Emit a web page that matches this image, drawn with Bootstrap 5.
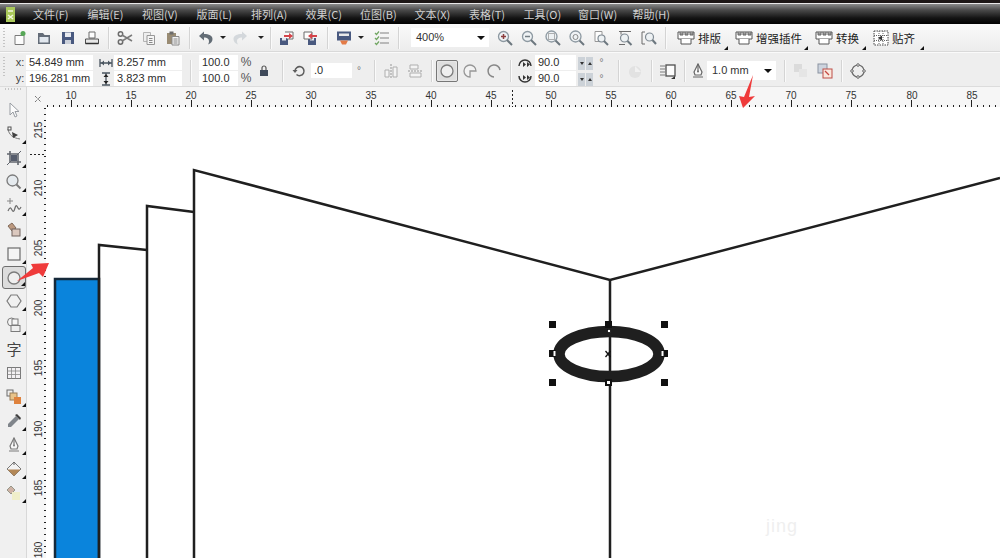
<!DOCTYPE html>
<html lang="zh">
<head>
<meta charset="utf-8">
<title>CorelDRAW</title>
<link href="https://cdn.jsdelivr.net/npm/bootstrap@5.3.0/dist/css/bootstrap.min.css" rel="stylesheet">
<style>
html,body{margin:0;width:1000px;height:558px;overflow:hidden;background:#f0f0f0}
body{font:11px/1.2 "Liberation Sans","Noto Sans CJK SC",sans-serif;color:#333}
.app-frame{width:1000px;height:558px;position:relative;overflow:hidden}
.top-strip{height:3px;background:#1d1716}
.white-line{height:1px;background:#e8e8e8}
.menu-bar{height:20px;background:linear-gradient(#8a8a8a 0,#4a4a4a 30%,#141414 70%,#000 100%);padding-left:6px;color:#d0d0d0;font:11px/20px "Noto Sans CJK SC","Liberation Sans",sans-serif}
.menu-bar .logo{width:27px}
.menu-item{width:54.5px;white-space:nowrap}
.tool-bar{height:27px;background:linear-gradient(#fafafa,#ececec);padding-left:8px;position:relative}
.line-gap{height:2px;background:#fafafa;border-top:1px solid #d9d9d9}
.prop-bar{height:34px;background:#eeeeee;padding-left:14px;padding-top:2px;border-bottom:1px solid #dcdcdc}
.ic{width:24px;height:24px;display:flex;align-items:center;justify-content:center;padding:0;border:0;border-radius:0;flex:none}
.ic svg,.lbl svg{display:block}
.ic svg{opacity:.85}
.dd{width:10px;height:24px;display:flex;align-items:center;justify-content:center;flex:none}
.dd::after{content:"";border:3px solid transparent;border-top:3px solid #222;border-bottom:0}
.sep{width:1px;height:22px;background:#d4d4d4;margin:0 4px;box-shadow:1px 0 0 #fafafa;flex:none}
.grip{position:absolute;left:3px;top:4px;width:2px;height:20px;background:repeating-linear-gradient(#c4c4c4 0 1px,transparent 1px 3px)}
.field{height:15px;background:#fff;line-height:15px;padding-left:3px;white-space:nowrap;color:#2d2d2d;flex:none}
.combo{height:19px;background:#fff;padding-left:5px;line-height:19px;position:relative;flex:none}
.combo::after{content:"";position:absolute;right:4px;top:8px;border:4px solid transparent;border-top:4px solid #111;border-bottom:0}
.w-z{width:78px}.w-o{width:69px}
.w-a{width:67px}.w-b{width:68px}.w-c{width:39px}.w-d{width:41px}
.lbl{display:flex;align-items:center;gap:3px;height:24px;position:relative;font:11.5px/24px "Noto Sans CJK SC",sans-serif;color:#222;flex:none;padding-left:7px;white-space:nowrap}
.lbl::after{content:"";position:absolute;right:0;bottom:0;border:2px solid transparent;border-right-color:#111;border-bottom-color:#111}
.l1{width:58px}.l2{width:80px}.l3{width:58px}.l4{width:58px}
.stack{display:flex;flex-direction:column;gap:1px;flex:none}
.axis{width:12px;color:#444;flex:none;text-align:center}
.mini-ic{width:20px;height:15px;display:flex;align-items:center;justify-content:center;flex:none}
.mini-ic.nar{width:17px}
.mini-ic.nar2{width:18px}
.pct{width:16px;height:15px;line-height:15px;font-size:12px;color:#555;text-align:center;flex:none}
.deg{font-size:10px;color:#777;flex:none;width:14px;text-align:center}
.deg.wide{width:17px}
.spin{display:flex;gap:1px;flex:none;margin-left:2px}
.spin span{width:7px;height:13px;background:#ccd2d8;display:flex;align-items:center;justify-content:center;margin-top:1px}
.spin .dn::after{content:"";border:2px solid transparent;border-top:3px solid #333;border-bottom:0}
.spin .up::after{content:"";border:2px solid transparent;border-bottom:3px solid #333;border-top:0}
.shape-on{width:22px;height:22px;background:#dedede;border:1px solid #777;border-radius:2px;box-shadow:inset 0 0 2px #fff}
.work{height:471px}
.tool-box{width:27px;background:#f0f0f0;padding-top:11px;border-right:1px solid #d8d8d8;position:relative;flex:none}
.tool-box .ic{margin-left:2px;position:relative}
.tool-box .fly::after{content:"";position:absolute;right:0;bottom:2px;border:2.5px solid transparent;border-right-color:#111;border-bottom-color:#111}
.tool-box .ic.picked{background:#dcdcdc;border:1px solid #6e6e6e;border-radius:3px;height:23px}
.tool-box .glyph{font:15px/24px "Noto Sans CJK SC",sans-serif;color:#444}
.top-grip{position:absolute;left:5px;top:1px;width:16px;height:2px;background:repeating-linear-gradient(90deg,#c4c4c4 0 1px,transparent 1px 3px)}
.stage{display:block;flex:none}
.stage text{font:10px "Liberation Sans",sans-serif;fill:#333}
.stage .mark{font:18px "Liberation Sans",sans-serif;fill:#efefef;letter-spacing:1px}
.callout{position:absolute;left:0;top:0;pointer-events:none}
</style>
</head>
<body>
<svg width="0" height="0" class="position-absolute">
<defs>
<symbol id="i-new" viewBox="0 0 16 16"><path d="M3 5.500h6l3 0v9H3z" fill="#fff" stroke="#666"/><circle cx="11" cy="3.500" r="2.500" fill="#3c9a3c"/></symbol>
<symbol id="i-open" viewBox="0 0 16 16"><path d="M2 3h5l1.500 2H14v9H2z" fill="#4b5563" /><rect x="3.500" y="7" width="9" height="5.500" fill="#dfe6ee"/></symbol>
<symbol id="i-save" viewBox="0 0 16 16"><path d="M2 2h12v12H2z" fill="#2c3f6c"/><rect x="5" y="2.500" width="6" height="4.500" fill="#e6e9f0"/><rect x="5" y="10" width="6" height="4" fill="#c5cbd6"/></symbol>
<symbol id="i-print" viewBox="0 0 16 16"><path d="M5 2h6v6H5z" fill="#fff" stroke="#555"/><path d="M1.500 9h13v4.500h-13z" fill="#e6e6e6" stroke="#333"/><path d="M1.500 13.500h13" stroke="#111" stroke-width="1.500"/></symbol>
<symbol id="i-cut" viewBox="0 0 16 16"><circle cx="3.500" cy="4" r="2.200" fill="none" stroke="#555" stroke-width="1.500"/><circle cx="3.500" cy="12" r="2.200" fill="none" stroke="#555" stroke-width="1.500"/><path d="M5 5l10 6M5 11L15 5" stroke="#666" stroke-width="1.500"/></symbol>
<symbol id="i-copy" viewBox="0 0 16 16"><path d="M2.500 2.500h7v9h-7z" fill="#eee" stroke="#aaa"/><path d="M6 5.500h7.500v9H6z" fill="#f6f6f6" stroke="#888"/><path d="M8 8.500h3.500M8 10.500h3.500M8 12.500h3.500" stroke="#777"/></symbol>
<symbol id="i-paste" viewBox="0 0 16 16"><path d="M2 3h9v11H2z" fill="#8a7a5e"/><rect x="4.500" y="1.500" width="4" height="3" fill="#555"/><path d="M7 6.500h7v8.500H7z" fill="#f4f4f4" stroke="#777"/><path d="M8.500 9h4M8.500 11h4M8.500 13h4" stroke="#777"/></symbol>
<symbol id="i-undo" viewBox="0 0 16 16"><path d="M6 1.500L1 6l5 4.500V7.500c3 0 5 1 5 4 0 1-.3 2-1 3 3-1 4.500-3 4.500-5.500 0-3.500-3.500-5-8.500-5z" fill="#4a5560"/></symbol>
<symbol id="i-redo" viewBox="0 0 16 16"><path d="M10 1.500L15 6l-5 4.500V7.500c-3 0-5 1-5 4 0 1 .3 2 1 3-3-1-4.500-3-4.500-5.500 0-3.500 3.500-5 8.500-5z" fill="#cfd4d8"/></symbol>
<symbol id="i-imp" viewBox="0 0 16 16"><rect x="1" y="8" width="8" height="7" fill="#2c3f6c"/><rect x="3" y="8" width="4" height="2.500" fill="#dfe4ec"/><path d="M6 2h8v7H8" fill="#fff" stroke="#555"/><path d="M5 5h5V3l4 3-4 3V7H5z" fill="#d0262d"/></symbol>
<symbol id="i-exp" viewBox="0 0 16 16"><rect x="5" y="8" width="8" height="7" fill="#2c3f6c"/><rect x="7" y="8" width="4" height="2.500" fill="#dfe4ec"/><path d="M1 2h8v7H1z" fill="#fff" stroke="#555"/><path d="M14 5H9V3L5 6l4 3V7h5z" fill="#d0262d"/></symbol>
<symbol id="i-app" viewBox="0 0 16 16"><rect x="1" y="1.500" width="14" height="9" fill="#2c3f6c"/><rect x="3" y="3.500" width="10" height="2.500" fill="#e8e8e8"/><path d="M4 10.500h8l-2 4H6z" fill="#e2672a"/></symbol>
<symbol id="i-opt" viewBox="0 0 16 16"><path d="M6 3h9M6 8h9M6 13h9" stroke="#9a9a9a" stroke-width="1.500"/><path d="M1 3l1.500 1.500L5 1.500M1 8l1.500 1.500L5 6.500M1 13l1.500 1.500L5 11.500" fill="none" stroke="#5c9a4a" stroke-width="1.200"/></symbol>
<symbol id="z-in" viewBox="0 0 16 16"><circle cx="6.500" cy="6.500" r="5" fill="#eef2f5" stroke="#7c8a94" stroke-width="1.300"/><path d="M10 10l5 5" stroke="#56636c" stroke-width="2"/><path d="M4 6.500h5M6.500 4v5" stroke="#7a1f1f" stroke-width="1.500"/></symbol>
<symbol id="z-out" viewBox="0 0 16 16"><circle cx="6.500" cy="6.500" r="5" fill="#eef2f5" stroke="#7c8a94" stroke-width="1.300"/><path d="M10 10l5 5" stroke="#56636c" stroke-width="2"/><path d="M4 6.500h5" stroke="#5d6a72" stroke-width="1.500"/></symbol>
<symbol id="z-sel" viewBox="0 0 16 16"><circle cx="6.500" cy="6.500" r="5.500" fill="#eef2f5" stroke="#7c8a94" stroke-width="1.300"/><path d="M10.500 10.500l4.500 4.500" stroke="#56636c" stroke-width="2"/><rect x="3.500" y="3.500" width="6" height="6" fill="none" stroke="#555" stroke-dasharray="1 1"/></symbol>
<symbol id="z-all" viewBox="0 0 16 16"><circle cx="6.500" cy="6.500" r="5.500" fill="#eef2f5" stroke="#7c8a94" stroke-width="1.300"/><path d="M10.500 10.500l4.500 4.500" stroke="#56636c" stroke-width="2"/><circle cx="6.500" cy="7" r="2.500" fill="none" stroke="#777"/></symbol>
<symbol id="z-page" viewBox="0 0 16 16"><path d="M2 1.500h7v10H2z" fill="#fff" stroke="#888"/><circle cx="8.500" cy="8.500" r="3.500" fill="#eef2f5" stroke="#6d7a84" stroke-width="1.200"/><path d="M11 11l4 4" stroke="#56636c" stroke-width="2"/></symbol>
<symbol id="z-wid" viewBox="0 0 16 16"><path d="M2 1.500h12M2 14.500h6M4 1.500v3" stroke="#555"/><circle cx="7.500" cy="8" r="4" fill="#eef2f5" stroke="#6d7a84" stroke-width="1.200"/><path d="M10.500 11l4 4" stroke="#56636c" stroke-width="2"/></symbol>
<symbol id="z-hei" viewBox="0 0 16 16"><path d="M1 2v12M1 2h3M1 14h3" stroke="#555"/><circle cx="8.500" cy="7" r="4" fill="#eef2f5" stroke="#6d7a84" stroke-width="1.200"/><path d="M11.500 10l3.500 4" stroke="#56636c" stroke-width="2"/></symbol>
<symbol id="i-tray" viewBox="0 0 18 16"><path d="M1 2h16v7H1z" fill="#fff" stroke="#555"/><path d="M3 2v3h3V2M8 2v3h3V2M13 2v3h3V2" fill="#999" stroke="#666"/><path d="M4 9v5h10V9" fill="#fff" stroke="#555"/></symbol>
<symbol id="i-snap" viewBox="0 0 16 16"><rect x="1" y="1" width="14" height="14" fill="#fff" stroke="#444" stroke-dasharray="1.500 1"/><path d="M6 1v14M10 1v14M1 5.500h14M1 10.500h14" stroke="#666" stroke-dasharray="1 1"/><path d="M5 8l4-2.500v5z" fill="#333"/></symbol>
<symbol id="i-wid" viewBox="0 0 14 10"><path d="M1 5h12M1 1v8M13 1v8" stroke="#4a5560" stroke-width="1.300"/><path d="M2 5l3-2.500v5zM12 5L9 2.500v5z" fill="#4a5560"/></symbol>
<symbol id="i-hei" viewBox="0 0 10 14"><path d="M5 1v12M1 1h8M1 13h8" stroke="#4a5560" stroke-width="1.300"/><path d="M5 2L2.500 5h5zM5 12L2.500 9h5z" fill="#222"/></symbol>
<symbol id="i-lock" viewBox="0 0 10 12"><path d="M3 5V3a2 2 0 0 1 4 0v2" fill="none" stroke="#555" stroke-width="1.200"/><rect x="1" y="5" width="8" height="6" fill="#3f4a5a"/></symbol>
<symbol id="i-rot" viewBox="0 0 14 14"><path d="M3 7a4.500 4.500 0 1 1 1.500 3.500" fill="none" stroke="#444" stroke-width="1.500"/><path d="M0.500 6h5L3 9z" fill="#444"/></symbol>
<symbol id="i-mir1" viewBox="0 0 16 16"><path d="M8 1v14" stroke="#888" stroke-dasharray="2 1"/><path d="M2 7h4v7H2zM10 4h4v10h-4z" fill="#f6f6f6" stroke="#a4a4a4"/></symbol>
<symbol id="i-mir2" viewBox="0 0 16 16"><path d="M1 8h14" stroke="#888" stroke-dasharray="2 1"/><path d="M3 2h8v4H3zM3 10h11v4H3z" fill="#f6f6f6" stroke="#a4a4a4"/></symbol>
<symbol id="i-arc0" viewBox="0 0 16 16"><circle cx="8" cy="8" r="6" fill="#f3f3f3" stroke="#6b6b6b" stroke-width="1.300"/></symbol>
<symbol id="i-arc1" viewBox="0 0 16 16"><path d="M8 8h6A6 6 0 1 0 8 14z" fill="#f5f5f5" stroke="#888" stroke-width="1.300"/></symbol>
<symbol id="i-arc2" viewBox="0 0 16 16"><path d="M14 7A6 6 0 1 0 8 14" fill="none" stroke="#777" stroke-width="1.500"/></symbol>
<symbol id="i-ang" viewBox="0 0 16 10"><path d="M2 8a6 6 0 0 1 12 0" fill="none" stroke="#333" stroke-width="1.500"/><path d="M6 9V4l3 2.500zM10 9V4l3 2.500z" fill="#333"/></symbol>
<symbol id="i-ang2" viewBox="0 0 16 10"><path d="M2 2a6 6 0 0 0 12 0" fill="none" stroke="#333" stroke-width="1.500"/><path d="M6 1v5l3-2.500zM10 1v5l3-2.500z" fill="#333"/></symbol>
<symbol id="i-wrap" viewBox="0 0 16 16"><circle cx="8" cy="9" r="6" fill="#e0e0e0"/><path d="M8 3v6h6" fill="#f2f2f2"/></symbol>
<symbol id="i-text" viewBox="0 0 16 16"><path d="M0 3h5M0 6h5M0 9h5M0 12h5" stroke="#666"/><rect x="6" y="2" width="9" height="11" fill="#fff" stroke="#333" stroke-width="1.300"/><path d="M11 16l4-3v3z" fill="#111"/></symbol>
<symbol id="i-pen" viewBox="0 0 14 16"><path d="M7 1L3 9l1 3h6l1-3z" fill="#fafafa" stroke="#666" stroke-width="1.200"/><path d="M7 1v7M2 14h10" stroke="#666" stroke-width="1.200"/><circle cx="7" cy="8.500" r="1" fill="#666"/></symbol>
<symbol id="i-back" viewBox="0 0 16 16"><rect x="1" y="1" width="8" height="8" fill="#d8d8d8"/><rect x="6" y="6" width="8" height="8" fill="#e4e4e4"/></symbol>
<symbol id="i-front" viewBox="0 0 16 16"><rect x="1" y="1" width="9" height="9" fill="#c8d0dc" stroke="#7a8494"/><rect x="6" y="6" width="9" height="9" fill="#fbe7dc" stroke="#b5332b"/><path d="M8 8l4 4" stroke="#c02a22" stroke-width="1.200"/></symbol>
<symbol id="i-round" viewBox="0 0 16 16"><circle cx="8" cy="8" r="6" fill="none" stroke="#555" stroke-width="1.200"/><g fill="#eee" stroke="#555"><circle cx="8" cy="2" r="1.300"/><circle cx="8" cy="14" r="1.300"/><circle cx="2" cy="8" r="1.300"/><circle cx="14" cy="8" r="1.300"/></g></symbol>
<symbol id="t-arrow" viewBox="0 0 16 16"><path d="M4 1v12l3-3 2 5 2-1-2-4.500h4z" fill="#fff" stroke="#8a8f96"/></symbol>
<symbol id="t-shape" viewBox="0 0 16 16"><path d="M2 3c1 6 5 9 12 10" fill="none" stroke="#666"/><rect x="2" y="1" width="3" height="3" fill="#fff" stroke="#333"/><path d="M6 6l6 3-5 3z" fill="#222"/></symbol>
<symbol id="t-crop" viewBox="0 0 16 16"><path d="M4 1v11h11M1 4h11v11" fill="none" stroke="#4a4f58" stroke-width="1.600"/><path d="M1 15L15 1" stroke="#4a4f58"/><rect x="5" y="5" width="6" height="6" fill="#3a4356"/></symbol>
<symbol id="t-zoom" viewBox="0 0 16 16"><circle cx="6.500" cy="6.500" r="5.500" fill="#e4e9ee" stroke="#666" stroke-width="1.300"/><path d="M10.500 10.500l4 4" stroke="#666" stroke-width="2"/></symbol>
<symbol id="t-free" viewBox="0 0 16 16"><path d="M4 0v6M1 3h6" stroke="#777"/><path d="M2 13c2-5 3-3 4-1s2 2 3-2 2-2 3 0 2 1 3-1" fill="none" stroke="#555" stroke-width="1.200"/></symbol>
<symbol id="t-smart" viewBox="0 0 16 16"><path d="M2 4l4-3 4 5-4 3z" fill="#b48a6c" stroke="#6e5340"/><rect x="6" y="7" width="8" height="7" fill="#d8c2b6" stroke="#5a4a44"/></symbol>
<symbol id="t-rect" viewBox="0 0 16 16"><rect x="2" y="2" width="12" height="12" fill="#f6f6f6" stroke="#555" stroke-width="1.200"/></symbol>
<symbol id="t-poly" viewBox="0 0 16 16"><path d="M5 2h6l4 6-4 6H5L1 8z" fill="#f2f2f2" stroke="#666" stroke-width="1.200"/></symbol>
<symbol id="t-basic" viewBox="0 0 16 16"><circle cx="5.500" cy="5" r="4" fill="#f6f6f6" stroke="#666"/><rect x="6" y="2" width="6" height="6" fill="#f6f6f6" stroke="#666"/><rect x="5" y="8.500" width="9" height="6" fill="#eee" stroke="#666"/></symbol>
<symbol id="t-table" viewBox="0 0 16 16"><rect x="1.500" y="2.500" width="13" height="11" fill="#f4f2f4" stroke="#666"/><path d="M5.500 2.500v11M9.500 2.500v11M1.500 6h13M1.500 9.500h13" stroke="#777" stroke-width=".8"/></symbol>
<symbol id="t-blend" viewBox="0 0 16 16"><rect x="1" y="1" width="6" height="6" fill="#eee" stroke="#555"/><rect x="4" y="4" width="7" height="7" fill="#e7bc78" stroke="#8a6a3c"/><rect x="8" y="8" width="7" height="7" fill="#dd6f1e"/></symbol>
<symbol id="t-drop" viewBox="0 0 16 16"><path d="M10 3l3 3-8 8H2v-3z" fill="#6d737a"/><path d="M9 2l2-1 4 4-1 2z" fill="#222"/></symbol>
<symbol id="t-fill" viewBox="0 0 16 16"><path d="M8 1l7 7-7 7-7-7z" fill="#f4f4f4" stroke="#666"/><path d="M1.500 8.500h13L8 15z" fill="#a8753c"/><path d="M8 1v3" stroke="#444"/></symbol>
<symbol id="t-inter" viewBox="0 0 16 16"><path d="M1 5l4-4 4 4-4 4z" fill="#c9a898" stroke="#887"/><rect x="6" y="7" width="8" height="8" fill="#f0efc4"/></symbol>
</defs>
</svg>

<div class="app-frame">
  <div class="top-strip"></div>
  <div class="white-line"></div>
  <nav class="menu-bar d-flex">
    <div class="logo d-flex align-items-center"><svg width="9" height="15" viewBox="0 0 9 15"><rect width="9" height="15" fill="#a9c85a"/><path d="M2 4h5M2 8l5 4M7 8l-5 4" stroke="#f4f8e0" stroke-width="1.500"/></svg></div>
    <span class="menu-item">文件(F)</span><span class="menu-item">编辑(E)</span><span class="menu-item">视图(V)</span><span class="menu-item">版面(L)</span><span class="menu-item">排列(A)</span><span class="menu-item">效果(C)</span><span class="menu-item">位图(B)</span><span class="menu-item">文本(X)</span><span class="menu-item">表格(T)</span><span class="menu-item">工具(O)</span><span class="menu-item">窗口(W)</span><span class="menu-item">帮助(H)</span>
  </nav>
  <div class="tool-bar d-flex align-items-center">
    <i class="grip"></i>
    <button class="btn ic"><svg width="16" height="16"><use href="#i-new"/></svg></button>
    <button class="btn ic"><svg width="16" height="16"><use href="#i-open"/></svg></button>
    <button class="btn ic"><svg width="16" height="16"><use href="#i-save"/></svg></button>
    <button class="btn ic"><svg width="16" height="16"><use href="#i-print"/></svg></button>
    <span class="sep"></span>
    <button class="btn ic"><svg width="16" height="16"><use href="#i-cut"/></svg></button>
    <button class="btn ic"><svg width="16" height="16"><use href="#i-copy"/></svg></button>
    <button class="btn ic"><svg width="16" height="16"><use href="#i-paste"/></svg></button>
    <span class="sep"></span>
    <button class="btn ic"><svg width="16" height="16"><use href="#i-undo"/></svg></button><span class="dd"></span>
    <button class="btn ic"><svg width="16" height="16"><use href="#i-redo"/></svg></button><span class="dd ms-1"></span>
    <span class="sep"></span>
    <button class="btn ic"><svg width="16" height="16"><use href="#i-imp"/></svg></button>
    <button class="btn ic"><svg width="16" height="16"><use href="#i-exp"/></svg></button>
    <span class="sep"></span>
    <button class="btn ic"><svg width="16" height="16"><use href="#i-app"/></svg></button><span class="dd"></span>
    <button class="btn ic ms-1"><svg width="16" height="16"><use href="#i-opt"/></svg></button>
    <span class="sep"></span>
    <div class="combo w-z ms-2">400%</div>
    <button class="btn ic ms-1"><svg width="16" height="16"><use href="#z-in"/></svg></button>
    <button class="btn ic"><svg width="16" height="16"><use href="#z-out"/></svg></button>
    <button class="btn ic"><svg width="16" height="16"><use href="#z-sel"/></svg></button>
    <button class="btn ic"><svg width="16" height="16"><use href="#z-all"/></svg></button>
    <button class="btn ic"><svg width="16" height="16"><use href="#z-page"/></svg></button>
    <button class="btn ic"><svg width="16" height="16"><use href="#z-wid"/></svg></button>
    <button class="btn ic"><svg width="16" height="16"><use href="#z-hei"/></svg></button>
    <span class="sep"></span>
    <div class="lbl l1"><svg width="18" height="16"><use href="#i-tray"/></svg>排版</div>
    <div class="lbl l2"><svg width="18" height="16"><use href="#i-tray"/></svg>增强插件</div>
    <div class="lbl l3"><svg width="18" height="16"><use href="#i-tray"/></svg>转换</div>
    <div class="lbl l4"><svg width="16" height="16"><use href="#i-snap"/></svg>贴齐</div>
  </div>
  <div class="line-gap"></div>
  <div class="prop-bar d-flex align-items-center position-relative">
    <i class="grip"></i>
    <div class="stack"><div class="d-flex"><span class="axis field bg-transparent p-0">x:</span><span class="field w-a">54.849 mm</span></div><div class="d-flex"><span class="axis field bg-transparent p-0">y:</span><span class="field w-a">196.281 mm</span></div></div>
    <div class="stack ms-1"><div class="d-flex"><span class="mini-ic nar"><svg width="14" height="10"><use href="#i-wid"/></svg></span><span class="field w-b">8.257 mm</span></div><div class="d-flex"><span class="mini-ic nar"><svg width="10" height="14"><use href="#i-hei"/></svg></span><span class="field w-b">3.823 mm</span></div></div>
    <span class="sep ms-2"></span>
    <div class="stack ms-1"><span class="field w-c">100.0</span><span class="field w-c">100.0</span></div>
    <div class="stack"><span class="pct">%</span><span class="pct">%</span></div>
    <span class="mini-ic"><svg width="10" height="12"><use href="#i-lock"/></svg></span>
    <span class="sep ms-2"></span>
    <span class="ic"><svg width="14" height="14"><use href="#i-rot"/></svg></span>
    <span class="field w-d">.0</span><span class="deg">°</span>
    <span class="sep ms-2"></span>
    <button class="btn ic"><svg width="16" height="16"><use href="#i-mir1"/></svg></button>
    <button class="btn ic"><svg width="16" height="16"><use href="#i-mir2"/></svg></button>
    <span class="sep"></span>
    <button class="btn ic shape-on"><svg width="16" height="16"><use href="#i-arc0"/></svg></button>
    <button class="btn ic"><svg width="16" height="16"><use href="#i-arc1"/></svg></button>
    <button class="btn ic"><svg width="16" height="16"><use href="#i-arc2"/></svg></button>
    <span class="sep"></span>
    <div class="stack"><div class="d-flex align-items-center"><span class="mini-ic"><svg width="16" height="10"><use href="#i-ang"/></svg></span><span class="field w-d">90.0</span><span class="spin"><span class="dn"></span><span class="up"></span></span><span class="deg wide">°</span></div><div class="d-flex align-items-center"><span class="mini-ic"><svg width="16" height="10"><use href="#i-ang2"/></svg></span><span class="field w-d">90.0</span><span class="spin"><span class="dn"></span><span class="up"></span></span><span class="deg wide">°</span></div></div>
    <span class="sep ms-2"></span>
    <button class="btn ic"><svg width="16" height="16"><use href="#i-wrap"/></svg></button>
    <span class="sep"></span>
    <button class="btn ic"><svg width="16" height="16"><use href="#i-text"/></svg></button>
    <span class="sep"></span>
    <span class="mini-ic nar2"><svg width="14" height="16"><use href="#i-pen"/></svg></span>
    <div class="combo w-o">1.0 mm</div>
    <span class="sep ms-2"></span>
    <button class="btn ic"><svg width="16" height="16"><use href="#i-back"/></svg></button>
    <button class="btn ic"><svg width="16" height="16"><use href="#i-front"/></svg></button>
    <span class="sep"></span>
    <button class="btn ic"><svg width="16" height="16"><use href="#i-round"/></svg></button>
  </div>
  <div class="work d-flex">
    <aside class="tool-box d-flex flex-column">
      <i class="top-grip"></i>
      <button class="btn ic"><svg width="16" height="16"><use href="#t-arrow"/></svg></button>
      <button class="btn ic fly"><svg width="16" height="16"><use href="#t-shape"/></svg></button>
      <button class="btn ic fly"><svg width="16" height="16"><use href="#t-crop"/></svg></button>
      <button class="btn ic fly"><svg width="16" height="16"><use href="#t-zoom"/></svg></button>
      <button class="btn ic fly"><svg width="16" height="16"><use href="#t-free"/></svg></button>
      <button class="btn ic fly"><svg width="16" height="16"><use href="#t-smart"/></svg></button>
      <button class="btn ic fly"><svg width="16" height="16"><use href="#t-rect"/></svg></button>
      <button class="btn ic fly picked"><svg width="16" height="16"><use href="#i-arc0"/></svg></button>
      <button class="btn ic fly"><svg width="16" height="16"><use href="#t-poly"/></svg></button>
      <button class="btn ic fly"><svg width="16" height="16"><use href="#t-basic"/></svg></button>
      <button class="btn ic glyph">字</button>
      <button class="btn ic"><svg width="16" height="16"><use href="#t-table"/></svg></button>
      <button class="btn ic fly"><svg width="16" height="16"><use href="#t-blend"/></svg></button>
      <button class="btn ic fly"><svg width="16" height="16"><use href="#t-drop"/></svg></button>
      <button class="btn ic fly"><svg width="14" height="16"><use href="#i-pen"/></svg></button>
      <button class="btn ic fly"><svg width="16" height="16"><use href="#t-fill"/></svg></button>
      <button class="btn ic fly"><svg width="16" height="16"><use href="#t-inter"/></svg></button>
    </aside>
    <svg class="stage" width="973" height="471" viewBox="27 87 973 471">
      <rect x="27" y="87" width="973" height="471" fill="#f6f6f6"/>
      <rect x="46" y="107" width="954" height="451" fill="#fff"/>
      <g stroke="#222">
        <line x1="47" x2="1000" y1="106" y2="106" stroke-width="2" stroke-dasharray="1 5"/>
        <line x1="71" x2="1000" y1="103.500" y2="103.500" stroke-width="7" stroke-dasharray="1 59"/>
        <line x1="45" x2="45" y1="108" y2="558" stroke-width="2" stroke-dasharray="1 5"/>
        <line x1="512.500" x2="512.500" y1="90" y2="107" stroke-dasharray="2 2"/>
        <line x1="30" x2="45" y1="154.500" y2="154.500" stroke-dasharray="2 2"/>
      </g>
      <g text-anchor="middle">
        <text x="71" y="99">10</text><text x="131" y="99">15</text><text x="191" y="99">20</text><text x="251" y="99">25</text><text x="311" y="99">30</text><text x="371" y="99">35</text><text x="431" y="99">40</text><text x="491" y="99">45</text><text x="551" y="99">50</text><text x="611" y="99">55</text><text x="671" y="99">60</text><text x="731" y="99">65</text><text x="791" y="99">70</text><text x="851" y="99">75</text><text x="912" y="99">80</text><text x="972" y="99">85</text>
        <text transform="translate(42 130) rotate(-90)">215</text><text transform="translate(42 188) rotate(-90)">210</text><text transform="translate(42 248) rotate(-90)">205</text><text transform="translate(42 308) rotate(-90)">200</text><text transform="translate(42 368) rotate(-90)">195</text><text transform="translate(42 429) rotate(-90)">190</text><text transform="translate(42 488) rotate(-90)">185</text><text transform="translate(42 550) rotate(-90)">180</text>
      </g>
      <path d="M35 96l6 6M35 102l6-6" stroke="#444" stroke-dasharray="1 1" fill="none"/>
      <g fill="none" stroke="#1f1f1f" stroke-width="2.500">
        <rect x="55" y="279" width="44" height="290" fill="#0a84dc" stroke="#15293a"/>
        <path d="M99 558V245l48 5"/>
        <path d="M147 558V206l47 6"/>
        <path d="M194 558V170l416 110 390-102"/>
        <path d="M610 280V558"/>
        <ellipse cx="609" cy="354" rx="50" ry="22.500" stroke-width="11.500"/>
      </g>
      <g fill="#111">
        <rect x="549" y="321" width="7" height="7"/><rect x="661" y="321" width="7" height="7"/><rect x="549" y="379" width="7" height="7"/><rect x="661" y="379" width="7" height="7"/>
        <rect x="605" y="321" width="7" height="7"/><rect x="605" y="379" width="7" height="7"/><rect x="549" y="350" width="7" height="7"/><rect x="661" y="350" width="7" height="7"/>
      </g>
      <g fill="#fff" stroke="#111" stroke-width=".8">
        <rect x="607.500" y="329.500" width="3" height="3"/><rect x="553.500" y="351" width="2" height="5" stroke="none"/><rect x="661.500" y="351" width="2" height="5" stroke="none"/><rect x="607" y="381" width="3" height="3" stroke="none"/>
      </g>
      <path d="M605.500 351l5 6M605.500 357l5-6" stroke="#111" stroke-width="1.300"/>
      <text class="mark" x="766" y="532">jing</text>
    </svg>
  </div>
  <svg class="callout" width="1000" height="558" viewBox="0 0 1000 558">
    <path d="M753 75L749 97 755 96 743 108 739 96 744 97Z" fill="#ef3b3b"/>
    <path d="M17 281L33 268 31 264 49 263 43 277 39 273Z" fill="#ef3b3b"/>
  </svg>
</div>
<script src="https://cdn.jsdelivr.net/npm/bootstrap@5.3.0/dist/js/bootstrap.bundle.min.js"></script>
</body>
</html>
